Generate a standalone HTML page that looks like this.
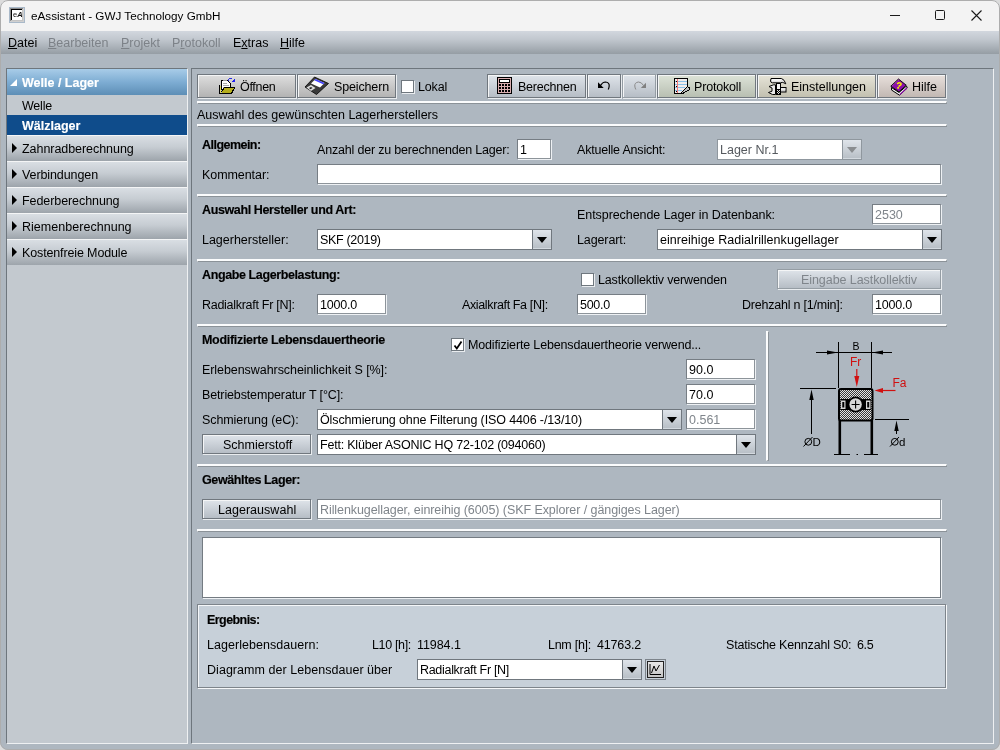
<!DOCTYPE html><html><head><meta charset="utf-8"><style>
*{box-sizing:border-box;margin:0;padding:0}
html,body{width:1000px;height:750px;overflow:hidden;background:#dcdcdc}
body{-webkit-font-smoothing:antialiased;font-family:"Liberation Sans",sans-serif;font-size:12.5px;color:#000;position:relative}
.a{position:absolute}
.t{position:absolute;white-space:pre;line-height:14px;font-size:12.5px}
.b{font-weight:bold;font-size:12.5px;-webkit-text-stroke:0.15px currentColor}
.dis{color:#7f858b}
.dtxt{color:#55595e}
#win{will-change:transform;position:absolute;left:0;top:0;width:1000px;height:750px;background:#aeb7c0;border-radius:8px;overflow:hidden}
#frame{position:absolute;left:0;top:0;width:1000px;height:750px;border:1px solid #adadad;border-radius:8px}
#title{position:absolute;left:0;top:0;width:1000px;height:31px;background:#f3f3f3}
#menu{position:absolute;left:0;top:31px;width:1000px;height:23px;background:linear-gradient(#d2d7de 0%,#c2c8cf 35%,#a9b0b7 72%,#959da4 100%)}
.mi{position:absolute;top:36px;line-height:14px;font-size:12.5px;white-space:pre}
.md{color:#7d8288}
u{text-decoration:underline;text-underline-offset:1px;text-decoration-thickness:1px}
#side{position:absolute;left:6px;top:68px;width:182px;height:676px;background:#c3c9cf;border-left:1px solid #6e767d;border-top:1px solid #6e767d;border-right:1px solid #eef0f2;border-bottom:1px solid #eef0f2}
.cat{position:absolute;left:0;width:180px;height:26px;border-top:1px solid #f4f5f6;background:linear-gradient(#d9dee3,#c6ccd2 45%,#9da4ab)}
.tri{position:absolute;left:5px;top:7px;width:0;height:0;border-top:5px solid transparent;border-bottom:5px solid transparent;border-left:5px solid #000}
#content{position:absolute;left:191px;top:68px;width:803px;height:676px;border-left:1px solid #6e767d;border-top:1px solid #6e767d;border-right:1px solid #eef0f2;border-bottom:1px solid #eef0f2}
.btn{position:absolute;border:1px solid #70777e;box-shadow:inset 1px 1px 0 #f4f5f6, 1px 1px 0 #e9ecef;background:linear-gradient(#e0e3e6,#b9bec4)}
.tb{background:linear-gradient(#dedede,#b3b3b3)}
.tbb{background:linear-gradient(#dfe4ea,#b6bdc5)}
.tbg{background:linear-gradient(#dde3d8,#b8bfb2)}
.tby{background:linear-gradient(#e6e4d8,#c2c0b0)}
.tbp{background:linear-gradient(#e8e0dc,#c2b8b3)}
.bdis{border-color:#959da4}
.bblue{background:linear-gradient(#dfe4ea,#b6bdc5)}
.fld{position:absolute;background:#fff;border:1px solid #767d84;border-right-color:#8d949a;border-bottom-color:#8d949a}
.sep{position:absolute;height:3px;border-top:2px solid #fbfcfd;border-left:1px solid #fbfcfd;border-bottom:1px solid #8b9298;border-right:1px solid #8b9298}
.vsep{position:absolute;width:3px;border-left:2px solid #fbfcfd;border-top:1px solid #fbfcfd;border-right:1px solid #8b9298;border-bottom:1px solid #8b9298}
.cb{position:absolute;width:13px;height:13px;background:#fff;border:1px solid #6f777e;box-shadow:1px 1px 0 #e9ecef}
.combo{position:absolute;background:#fff;border:1px solid #70777e}
.arr{position:absolute;right:0;top:0;width:19px;height:100%;background:linear-gradient(#dfe4ea,#b7bec5);border-left:1px solid #70777e;box-shadow:inset 0 -1px 0 #d3d9df}
.arr:after{content:"";position:absolute;left:4px;top:7px;border-left:5px solid transparent;border-right:5px solid transparent;border-top:6px solid #000}
.cdis{border-color:#8f979e}
.cdis .arr{border-left-color:#8f979e}
.cdis .arr:after{border-top-color:#8a8d90}
</style></head><body><div id="win">
<div id="title">
 <div class="a" style="left:9px;top:7px;width:16px;height:16px;background:#d0d0d0;border:1px solid #a9b9c9"></div>
 <div class="a" style="left:10px;top:8px;width:13px;height:13px;border-left:1px solid #8a8a8a;border-top:1px solid #8a8a8a"></div>
 <div class="a" style="left:11px;top:9px;width:12px;height:12px;background:#fff;border-left:1.3px solid #000;border-top:1.3px solid #000"></div>
 <div class="a" style="left:22px;top:9px;width:1px;height:12px;background:#c4c4c4"></div>
 <div class="a" style="left:11px;top:20px;width:12px;height:1px;background:#c4c4c4"></div>
 <div class="a" style="left:13px;top:11px;font-size:7.5px;line-height:8px;white-space:pre;color:#111">e<b><i>A</i></b></div>
</div>
<div class="t " style="left:31px;top:8.72px;font-size:11.7px;color:#1b1b1bletter-spacing:-0.435px;">eAssistant - GWJ Technology GmbH</div>
<div class="a" style="left:890px;top:15px;width:10px;height:1px;background:#1a1a1a"></div>
<div class="a" style="left:935px;top:10px;width:10px;height:10px;border:1px solid #1a1a1a;border-radius:1.5px"></div>
<svg class="a" style="left:971px;top:10px" width="11" height="11"><path d="M0.5 0.5L10.5 10.5M10.5 0.5L0.5 10.5" stroke="#1a1a1a" stroke-width="1.1"/></svg>
<div id="menu"></div>
<div class="mi" style="left:8px"><u>D</u>atei</div>
<div class="mi md" style="left:48px"><u>B</u>earbeiten</div>
<div class="mi md" style="left:121px"><u>P</u>rojekt</div>
<div class="mi md" style="left:172px">P<u>r</u>otokoll</div>
<div class="mi" style="left:233px">E<u>x</u>tras</div>
<div class="mi" style="left:280px"><u>H</u>ilfe</div>
<div id="side">
<div class="a" style="left:0;top:0;width:180px;height:26px;background:linear-gradient(#a8cce8,#7eadd3 50%,#5d8eb6)"><div class="a" style="left:3px;top:10px;width:0;height:0;border-bottom:7px solid #fff;border-left:7px solid transparent"></div></div>
<div class="a" style="left:0;top:26px;width:180px;height:20px;background:#c3c9cf"></div>
<div class="a" style="left:0;top:46px;width:180px;height:20px;background:#0f4c8b"></div>
<div class="cat" style="top:66px"><div class="tri"></div></div>
<div class="cat" style="top:92px"><div class="tri"></div></div>
<div class="cat" style="top:118px"><div class="tri"></div></div>
<div class="cat" style="top:144px"><div class="tri"></div></div>
<div class="cat" style="top:170px"><div class="tri"></div></div>
</div>
<div class="t b" style="left:22px;top:76.18px;color:#fff;font-size:12pxletter-spacing:-0.032px;">Welle / Lager</div>
<div class="t " style="left:22px;top:99.18px;letter-spacing:-0.206px;">Welle</div>
<div class="t b" style="left:22px;top:119.18px;color:#fff;font-size:12pxletter-spacing:0.054px;">Wälzlager</div>
<div class="t " style="left:22px;top:142.18px;letter-spacing:-0.053px;">Zahnradberechnung</div>
<div class="t " style="left:22px;top:168.18px;letter-spacing:-0.096px;">Verbindungen</div>
<div class="t " style="left:22px;top:194.18px;letter-spacing:-0.079px;">Federberechnung</div>
<div class="t " style="left:22px;top:220.18px;letter-spacing:0.031px;">Riemenberechnung</div>
<div class="t " style="left:22px;top:246.18px;letter-spacing:-0.134px;">Kostenfreie Module</div>
<div id="content"></div>
<div class="btn tb" style="left:197px;top:74px;width:99px;height:24px"></div>
<div class="btn tb" style="left:297px;top:74px;width:99px;height:24px"></div>
<div class="cb" style="left:401px;top:80px"></div>
<div class="t " style="left:418px;top:80.18px;letter-spacing:-0.158px;">Lokal</div>
<div class="btn tbb" style="left:487px;top:74px;width:99px;height:24px"></div>
<div class="btn tbb" style="left:587px;top:74px;width:34px;height:24px"></div>
<div class="btn tbb bdis" style="left:622px;top:74px;width:34px;height:24px"></div>
<div class="btn tbg" style="left:657px;top:74px;width:99px;height:24px"></div>
<div class="btn tby" style="left:757px;top:74px;width:119px;height:24px"></div>
<div class="btn tbp" style="left:877px;top:74px;width:69px;height:24px"></div>
<div class="t " style="left:240px;top:80.18px;letter-spacing:-0.302px;">Öffnen</div>
<div class="t " style="left:334px;top:80.18px;letter-spacing:-0.144px;">Speichern</div>
<div class="t " style="left:518px;top:80.18px;letter-spacing:-0.219px;">Berechnen</div>
<div class="t " style="left:694px;top:80.18px;letter-spacing:-0.182px;">Protokoll</div>
<div class="t " style="left:791px;top:80.18px;letter-spacing:-0.005px;">Einstellungen</div>
<div class="t " style="left:912px;top:80.18px;">Hilfe</div>
<svg class="a" style="left:214px;top:74px" width="24" height="24" shape-rendering="crispEdges"><path d="M7.5 6.5H13.5L16.5 9.5V15.5H7.5Z" fill="#fff" stroke="#000" stroke-width="1"/><path d="M8.5 6.5H13" stroke="#999" stroke-width="1"/><path d="M9 9.5H13M9 11.5H15M9 13.5H15" stroke="#aaa" stroke-width="1"/><path d="M5.5 10.5V19.5H17.5L20.5 13.5H10.5L7.5 18" fill="none" stroke="#000" stroke-width="1.2"/><path d="M6.2 11V19H7.5L10.8 14H20L17 19H7" fill="#b5ad1c"/><path d="M6.5 11.5V18.5" stroke="#e5de60" stroke-width="1"/><path d="M14 6.5Q17 2.5 19.5 5.5" fill="none" stroke="#3030e0" stroke-width="1" stroke-dasharray="1.3 0.7"/><path d="M17.5 8L21 4.8V8Z" fill="#2020f0"/></svg>
<svg class="a" style="left:300px;top:72px" width="32" height="26"><path d="M14.5 5L28.5 11.5L16.5 22.5L5 15Z" fill="#3a3a3a" stroke="#000" stroke-width="0.8"/><path d="M15.5 7L24.5 11L20 15.5L11 11.5Z" fill="#fff"/><path d="M15.5 7L24.5 11L23.2 12.3L14.2 8.3Z" fill="#4040ff"/><path d="M6.5 15.5L11 13L15.5 16L11 19Z" fill="#ddd"/><path d="M9 16L11 15L12.5 16L10.5 17.2Z" fill="#222"/></svg>
<svg class="a" style="left:494px;top:74px" width="22" height="24" shape-rendering="crispEdges"><rect x="3.5" y="3.5" width="14" height="16" rx="1" fill="#d9aeb0" stroke="#000" stroke-width="1.2"/><rect x="5.5" y="5.5" width="10" height="3" fill="#fff" stroke="#000" stroke-width="1"/><rect x="5" y="10" width="2" height="2" fill="#000"/><rect x="5" y="13" width="2" height="2" fill="#000"/><rect x="5" y="16" width="2" height="2" fill="#000"/><rect x="8" y="10" width="2" height="2" fill="#000"/><rect x="8" y="13" width="2" height="2" fill="#000"/><rect x="8" y="16" width="2" height="2" fill="#000"/><rect x="11" y="10" width="2" height="2" fill="#000"/><rect x="11" y="13" width="2" height="2" fill="#000"/><rect x="11" y="16" width="2" height="2" fill="#000"/><rect x="14" y="10" width="2" height="2" fill="#000"/><rect x="14" y="13" width="2" height="2" fill="#000"/><rect x="14" y="16" width="2" height="2" fill="#000"/></svg>
<svg class="a" style="left:592px;top:76px" width="60" height="18"><path d="M6 6.3L6 12H11.7Z" fill="#000"/><path d="M8.5 9.5Q10.5 6 13.5 6Q17.5 6.5 17.2 10Q17 12 16.2 13.5" fill="none" stroke="#000" stroke-width="1.2"/><path d="M54 6.8L54 12H48.8Z" fill="#808080"/><path d="M51.5 9.5Q49.5 6 46.5 6Q42.5 6.5 42.8 10Q43 12 43.8 13.5" fill="none" stroke="#8a8a8a" stroke-width="1"/></svg>
<svg class="a" style="left:670px;top:75px" width="24" height="22" shape-rendering="crispEdges"><path d="M4.5 3.5H17.5V11.5L10.5 18.5H4.5Z" fill="#f0ecec" stroke="#000" stroke-width="1.2"/><path d="M5 6.5H17M5 9.5H17M5 12.5H15M5 15.5H12" stroke="#8cc0e8" stroke-width="1"/><path d="M7.5 4V18" stroke="#f07878" stroke-width="1"/><path d="M17.5 11.5L19 12.5V15L12.5 18.5H10.5Z" fill="#c0c0c0" stroke="#000" stroke-width="1"/><rect x="6" y="5.5" width="1" height="1.5" fill="#000"/><rect x="6" y="10.5" width="1" height="1.5" fill="#000"/><rect x="6" y="15.5" width="1" height="1.5" fill="#000"/></svg>
<svg class="a" style="left:763px;top:74px" width="26" height="23"><path d="M8 4.5H18.5Q21.5 5.5 22.8 9.8L20.8 8.8Q19.5 8 17.5 8.8H9.5Q7.5 8.5 7.5 7Z" fill="#e2e2e2" stroke="#000" stroke-width="1"/><path d="M9 5.8H18" stroke="#fff" stroke-width="1.2"/><path d="M6 12.5L10.5 10.8H12.5V20.5H9.5L5.5 18.5L9 17.2V14Z" fill="#e8e8e8" stroke="#000" stroke-width="1"/><rect x="17.5" y="13.5" width="5.5" height="4.5" fill="#d0d0d0" stroke="#000" stroke-width="1"/><path d="M18 15H22.5" stroke="#fff" stroke-width="1"/><rect x="13" y="9" width="5" height="12" fill="#000"/><rect x="14" y="10" width="3" height="5" fill="#f4f4f4"/><rect x="14" y="16" width="1" height="1" fill="#ddd"/><rect x="16" y="16" width="1" height="1" fill="#ddd"/><rect x="15" y="17" width="1" height="1" fill="#ddd"/><rect x="14" y="18" width="1" height="1" fill="#ddd"/><rect x="16" y="18" width="1" height="1" fill="#ddd"/><rect x="15" y="19" width="1" height="1" fill="#ddd"/></svg>
<svg class="a" style="left:887px;top:75px" width="24" height="22"><path d="M4.5 12.5L12 17.5L19.5 11L20.2 13L12.5 20.2L4.5 15Z" fill="#eeeeee" stroke="#000" stroke-width="1"/><path d="M12.8 19.6L19.8 13" stroke="#8b0fa8" stroke-width="1.1"/><path d="M3.8 11.2L11.5 4L19.2 10.2L12 16.8Z" fill="#8b0fa8" stroke="#000" stroke-width="0.9"/><path d="M5 11L11.5 5" stroke="#c070d0" stroke-width="0.8" stroke-dasharray="1 1"/><path d="M10.2 9Q12 7 13.9 8.3Q14.8 9.8 12.4 10.8L11.6 11.6" fill="none" stroke="#f4f000" stroke-width="1.5"/><rect x="10.2" y="12.1" width="1.8" height="1.6" fill="#f4f000"/></svg>
<div class="sep" style="left:197px;top:101px;width:750px"></div>
<div class="t " style="left:197px;top:108.18px;letter-spacing:-0.003px;">Auswahl des gewünschten Lagerherstellers</div>
<div class="sep" style="left:197px;top:124px;width:750px"></div>
<div class="t b" style="left:202px;top:138.18px;letter-spacing:-0.531px;">Allgemein:</div>
<div class="t " style="left:317px;top:143.18px;letter-spacing:-0.187px;">Anzahl der zu berechnenden Lager:</div>
<div class="fld" style="left:517px;top:139px;width:34px;height:20px;box-shadow:1px 1px 0 #eef1f4;"></div>
<div class="t " style="left:520px;top:143.18px;">1</div>
<div class="t " style="left:577px;top:143.18px;letter-spacing:-0.201px;">Aktuelle Ansicht:</div>
<div class="combo cdis" style="left:717px;top:139px;width:145px;height:21px"><div class="arr"></div></div>
<div class="t dtxt" style="left:720px;top:143.18px;">Lager Nr.1</div>
<div class="t " style="left:202px;top:168.18px;letter-spacing:-0.069px;">Kommentar:</div>
<div class="fld" style="left:317px;top:164px;width:624px;height:20px;box-shadow:1px 1px 0 #eef1f4;"></div>
<div class="sep" style="left:197px;top:194px;width:750px"></div>
<div class="t b" style="left:202px;top:203.18px;letter-spacing:-0.376px;">Auswahl Hersteller und Art:</div>
<div class="t " style="left:577px;top:208.18px;letter-spacing:-0.065px;">Entsprechende Lager in Datenbank:</div>
<div class="fld" style="left:872px;top:204px;width:69px;height:20px;box-shadow:1px 1px 0 #eef1f4;"></div>
<div class="t dis" style="left:875px;top:208.18px;">2530</div>
<div class="t " style="left:202px;top:233.18px;letter-spacing:-0.016px;">Lagerhersteller:</div>
<div class="combo" style="left:317px;top:229px;width:235px;height:21px"><div class="arr"></div></div>
<div class="t " style="left:320px;top:233.18px;letter-spacing:-0.332px;">SKF (2019)</div>
<div class="t " style="left:577px;top:233.18px;letter-spacing:-0.115px;">Lagerart:</div>
<div class="combo" style="left:657px;top:229px;width:285px;height:21px"><div class="arr"></div></div>
<div class="t " style="left:660px;top:233.18px;letter-spacing:0.048px;">einreihige Radialrillenkugellager</div>
<div class="sep" style="left:197px;top:259px;width:750px"></div>
<div class="t b" style="left:202px;top:268.18px;letter-spacing:-0.388px;">Angabe Lagerbelastung:</div>
<div class="cb" style="left:581px;top:273px"></div>
<div class="t " style="left:598px;top:273.18px;letter-spacing:-0.170px;">Lastkollektiv verwenden</div>
<div class="btn bdis bblue" style="left:777px;top:269px;width:164px;height:20px"></div>
<div class="t dis" style="left:801px;top:273.18px;letter-spacing:-0.068px;">Eingabe Lastkollektiv</div>
<div class="t " style="left:202px;top:298.18px;letter-spacing:-0.281px;">Radialkraft Fr [N]:</div>
<div class="fld" style="left:317px;top:294px;width:69px;height:20px;box-shadow:1px 1px 0 #eef1f4;"></div>
<div class="t " style="left:320px;top:298.18px;letter-spacing:-0.189px;">1000.0</div>
<div class="t " style="left:462px;top:298.18px;letter-spacing:-0.366px;">Axialkraft Fa [N]:</div>
<div class="fld" style="left:577px;top:294px;width:69px;height:20px;box-shadow:1px 1px 0 #eef1f4;"></div>
<div class="t " style="left:580px;top:298.18px;letter-spacing:-0.276px;">500.0</div>
<div class="t " style="left:742px;top:298.18px;letter-spacing:-0.217px;">Drehzahl n [1/min]:</div>
<div class="fld" style="left:872px;top:294px;width:69px;height:20px;box-shadow:1px 1px 0 #eef1f4;"></div>
<div class="t " style="left:875px;top:298.18px;letter-spacing:-0.189px;">1000.0</div>
<div class="sep" style="left:197px;top:324px;width:750px"></div>
<div class="t b" style="left:202px;top:333.18px;letter-spacing:-0.303px;">Modifizierte Lebensdauertheorie</div>
<div class="cb" style="left:451px;top:338px"></div>
<svg class="a" style="left:452px;top:339px" width="12" height="12"><path d="M2.5 6.5 L4.8 9.5 L9.5 2.5" stroke="#000" stroke-width="1.8" fill="none"/></svg>
<div class="t " style="left:468px;top:338.18px;letter-spacing:-0.156px;">Modifizierte Lebensdauertheorie verwend...</div>
<div class="t " style="left:202px;top:363.18px;letter-spacing:-0.066px;">Erlebenswahrscheinlichkeit S [%]:</div>
<div class="fld" style="left:686px;top:359px;width:69px;height:20px;box-shadow:1px 1px 0 #eef1f4;"></div>
<div class="t " style="left:689px;top:363.18px;">90.0</div>
<div class="t " style="left:202px;top:388.18px;letter-spacing:-0.134px;">Betriebstemperatur T [°C]:</div>
<div class="fld" style="left:686px;top:384px;width:69px;height:20px;box-shadow:1px 1px 0 #eef1f4;"></div>
<div class="t " style="left:689px;top:388.18px;">70.0</div>
<div class="t " style="left:202px;top:413.18px;letter-spacing:-0.085px;">Schmierung (eC):</div>
<div class="combo" style="left:317px;top:409px;width:365px;height:21px"><div class="arr"></div></div>
<div class="t " style="left:320px;top:413.18px;letter-spacing:-0.120px;">Ölschmierung ohne Filterung (ISO 4406 -/13/10)</div>
<div class="fld" style="left:686px;top:409px;width:69px;height:20px;box-shadow:1px 1px 0 #eef1f4;"></div>
<div class="t dis" style="left:689px;top:413.18px;">0.561</div>
<div class="btn bblue" style="left:202px;top:434px;width:109px;height:20px"></div>
<div class="t " style="left:223px;top:438.18px;letter-spacing:-0.004px;">Schmierstoff</div>
<div class="combo" style="left:317px;top:434px;width:439px;height:21px"><div class="arr"></div></div>
<div class="t " style="left:320px;top:438.18px;letter-spacing:-0.209px;">Fett: Klüber ASONIC HQ 72-102 (094060)</div>
<div class="vsep" style="left:766px;top:331px;height:130px"></div>
<svg class="a" style="left:790px;top:335px" width="130" height="125" viewBox="790 335 130 125"><defs><pattern id="hp" width="2" height="2" patternUnits="userSpaceOnUse"><rect width="2" height="2" fill="#3a3a3a"/><rect width="1" height="1" fill="#e4e4e4"/><rect x="1" y="1" width="1" height="1" fill="#e4e4e4"/></pattern></defs><g stroke="#000" stroke-width="1" fill="none"><path d="M838.5 342V388M871.5 342V388M816 352.5H892"/><path d="M800 388.5H836M811.5 392V434M875 419.5H909M896.5 424V434"/></g><path d="M827 350.5L838 352.5L827 354.5Z M883 350.5L872 352.5L883 354.5Z M809.3 400L811.5 389.5L813.7 400Z M894.3 431L896.5 420.5L898.7 431Z" fill="#000"/><text x="852.6" y="349.8" font-family="Liberation Sans" font-size="10.5" fill="#000">B</text><text x="850" y="366" font-family="Liberation Sans" font-size="12" fill="#d01010">Fr</text><text x="892.5" y="387" font-family="Liberation Sans" font-size="12" fill="#d01010">Fa</text><path d="M856.8 369V377" stroke="#d01010" stroke-width="1.2"/><path d="M854.3 376L856.8 387L859.3 376Z" fill="#d01010"/><path d="M882 390.5H895.5" stroke="#d01010" stroke-width="1.2"/><path d="M883 388L874.5 390.5L883 393Z" fill="#d01010"/><rect x="839" y="389" width="33.5" height="31.5" rx="2" fill="url(#hp)" stroke="#000" stroke-width="2"/><rect x="840.5" y="399" width="30.5" height="11" fill="#000"/><rect x="841" y="400.5" width="4.5" height="8.5" fill="#d8d8d8"/><rect x="866" y="400.5" width="4.5" height="8.5" fill="#d8d8d8"/><rect x="842.3" y="402" width="2" height="5.5" fill="#000"/><rect x="867.2" y="402" width="2" height="5.5" fill="#000"/><circle cx="855.6" cy="404.5" r="8" fill="#000"/><circle cx="855.6" cy="404.5" r="6.2" fill="#d6d6d6"/><path d="M855.6 400.5V408.5M851.6 404.5H859.6" stroke="#000" stroke-width="1.1"/><path d="M839.8 420V454M871.8 420V454" stroke="#000" stroke-width="2.6"/><path d="M834 454.5H850M864 454.5H878M856.5 454.5H858" stroke="#000" stroke-width="1.2"/><g fill="none" stroke="#000" stroke-width="1"><circle cx="808.3" cy="441.8" r="3.4"/><path d="M803.5 446.5L812.5 437"/><circle cx="894.8" cy="441.8" r="3.4"/><path d="M890 446.5L899 437"/></g><text x="812.5" y="446" font-family="Liberation Sans" font-size="11.5" fill="#000">D</text><text x="899" y="446" font-family="Liberation Sans" font-size="11.5" fill="#000">d</text></svg>
<div class="sep" style="left:197px;top:464px;width:750px"></div>
<div class="t b" style="left:202px;top:473.18px;letter-spacing:-0.388px;">Gewähltes Lager:</div>
<div class="btn bblue" style="left:202px;top:499px;width:109px;height:20px"></div>
<div class="t " style="left:218px;top:503.18px;letter-spacing:0.030px;">Lagerauswahl</div>
<div class="fld" style="left:317px;top:499px;width:624px;height:20px;box-shadow:1px 1px 0 #eef1f4;"></div>
<div class="t dis" style="left:320px;top:503.18px;letter-spacing:-0.077px;">Rillenkugellager, einreihig (6005) (SKF Explorer / gängiges Lager)</div>
<div class="sep" style="left:197px;top:529px;width:750px"></div>
<div class="a" style="left:202px;top:537px;width:739px;height:61px;background:#fff;border:1px solid #747b82;box-shadow:1px 1px 0 #eef1f4"></div>
<div class="a" style="left:197px;top:604px;width:749px;height:84px;background:#c7d0d9;border:1px solid #7d848b;box-shadow:inset 1px 1px 0 #f5f7f9, 1px 1px 0 #f5f7f9"></div>
<div class="t b" style="left:207px;top:613.18px;letter-spacing:-0.562px;">Ergebnis:</div>
<div class="t " style="left:207px;top:638.18px;letter-spacing:0.044px;">Lagerlebensdauern:</div>
<div class="t " style="left:372px;top:638.18px;letter-spacing:-0.338px;">L10 [h]:</div>
<div class="t " style="left:417px;top:638.18px;letter-spacing:-0.067px;">11984.1</div>
<div class="t " style="left:548px;top:638.18px;letter-spacing:-0.271px;">Lnm [h]:</div>
<div class="t " style="left:597px;top:638.18px;letter-spacing:-0.170px;">41763.2</div>
<div class="t " style="left:726px;top:638.18px;letter-spacing:-0.180px;">Statische Kennzahl S0:</div>
<div class="t " style="left:857px;top:638.18px;letter-spacing:-0.330px;">6.5</div>
<div class="t " style="left:207px;top:663.18px;letter-spacing:0.040px;">Diagramm der Lebensdauer über</div>
<div class="combo" style="left:417px;top:659px;width:225px;height:21px"><div class="arr"></div></div>
<div class="t " style="left:420px;top:663.18px;letter-spacing:-0.304px;">Radialkraft Fr [N]</div>
<div class="a" style="left:645px;top:659px;width:21px;height:21px;border:1px solid #7d848b;background:#c7d0d9"></div>
<div class="a" style="left:647px;top:661px;width:17px;height:17px;border:1px solid #222;background:linear-gradient(#e8e8e8,#c4c4c4)"></div>
<svg class="a" style="left:648px;top:662px" width="15" height="15"><path d="M2 2V12.5H13" stroke="#000" stroke-width="1" fill="none"/><path d="M3.5 11L6 4L8 9L11.5 3" stroke="#000" stroke-width="1" fill="none"/></svg>
</div><div id="frame"></div></body></html>
